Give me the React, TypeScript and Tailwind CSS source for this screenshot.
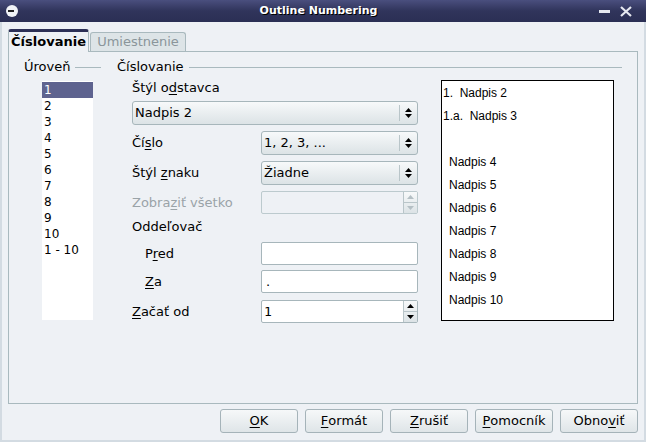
import React from "react"

const font = { fontFamily: '"DejaVu Sans", Verdana, sans-serif' }

function U({ children }: { children: React.ReactNode }) {
  return <span className="underline underline-offset-2">{children}</span>
}

function Arrows({ color = "#000" }: { color?: string }) {
  return (
    <svg width="7" height="10" viewBox="0 0 7 10">
      <path d="M3.5 0 L7 4 L0 4 Z" fill={color} />
      <path d="M0 6 L7 6 L3.5 10 Z" fill={color} />
    </svg>
  )
}

function Dropdown({ text, className }: { text: string; className?: string }) {
  return (
    <div
      className={`h-[24px] flex items-center border border-[#a7b6bb] rounded-[3px] bg-gradient-to-b from-[#f7f9fa] to-[#dce3e6] ${className}`}
    >
      <div className="flex-1 pl-[2px] text-[13px] text-black">{text}</div>
      <div className="h-[16px] w-px bg-[#b9c5c9]" />
      <div className="w-[17px] flex justify-center">
        <Arrows />
      </div>
    </div>
  )
}

function Field({ text, className }: { text?: string; className?: string }) {
  return (
    <div className={`h-[23px] flex items-center border border-[#a7b6bb] rounded-[2px] bg-white pl-[4px] text-[13px] ${className}`}>
      {text}
    </div>
  )
}

function Spin({ text, disabled }: { text?: string; disabled?: boolean }) {
  return (
    <div
      className={`h-[23px] flex border rounded-[2px] ${
        disabled ? "border-[#bccace] bg-[#eef1f5]" : "border-[#a7b6bb] bg-white"
      }`}
    >
      <div className="flex-1 flex items-center pl-[2px] text-[13px]" style={{ fontFamily: '"DejaVu Sans Mono", monospace' }}>
        {text}
      </div>
      <div className="w-[14px] flex flex-col border-l border-[#b9c5c9] bg-gradient-to-b from-[#f7f9fa] to-[#dce3e6]">
        <div className="flex-1 flex items-center justify-center border-b border-[#b9c5c9]">
          <svg width="7" height="4" viewBox="0 0 7 4">
            <path d="M3.5 0 L7 4 L0 4 Z" fill={disabled ? "#b4bfc4" : "#000"} />
          </svg>
        </div>
        <div className="flex-1 flex items-center justify-center">
          <svg width="7" height="4" viewBox="0 0 7 4">
            <path d="M0 0 L7 0 L3.5 4 Z" fill={disabled ? "#b4bfc4" : "#000"} />
          </svg>
        </div>
      </div>
    </div>
  )
}

function Btn({ children }: { children: React.ReactNode }) {
  return (
    <div className="w-[78px] h-[24px] flex items-center justify-center border border-[#a5b3b9] rounded-[3px] bg-gradient-to-b from-[#f6f8f9] to-[#dfe5e8] text-[13px] text-black">
      {children}
    </div>
  )
}

export default function App() {
  const levels = ["1", "2", "3", "4", "5", "6", "7", "8", "9", "10", "1 - 10"]
  return (
    <div className="w-[646px] h-[442px] flex flex-col bg-[#eef1f5] overflow-hidden" style={font}>
      {/* Title bar */}
      <div className="h-[22px] flex items-center bg-gradient-to-b from-[#4a4f7e] via-[#30345b] to-[#2b2f54] px-[6px]">
        <div className="w-[12px] h-[12px] rounded-full bg-[#f2f4f8] flex items-center justify-center">
          <div className="w-[6px] h-[2px] bg-[#222] -ml-[3px]" />
        </div>
        <div
          className="flex-1 text-center text-white font-bold text-[11px] pl-[20px]"
          style={{ textShadow: "1px 1px 0 #000" }}
        >
          Outline Numbering
        </div>
        <div className="flex items-center gap-[10px] pr-[8px]">
          <div className="w-[11px] h-[3px] bg-[#e6e8f0]" />
          <svg width="12" height="11" viewBox="0 0 12 11">
            <path d="M1 1 L11 10 M11 1 L1 10" stroke="#e6e8f0" strokeWidth="2.2" />
          </svg>
        </div>
      </div>

      {/* Body */}
      <div className="flex-1 flex flex-col border-l-2 border-r-2 border-b-2 border-[#d3dbe2] px-[6px]">
        {/* Tabs */}
        <div className="flex items-end mt-[6px] h-[23px]">
          <div className="h-[23px] w-[81px] flex items-center justify-center border-t-[3px] border-t-[#2c2f56] border-l border-r border-[#a9b9be] rounded-t-[3px] bg-[#eef1f5] font-bold text-[13px] text-black relative z-10 -mb-px">
            Číslovanie
          </div>
          <div className="h-[19px] w-[96px] ml-[1px] flex items-center justify-center border border-b-0 border-[#a9b9be] rounded-t-[3px] bg-[#dde4e7] text-[13px] text-[#8a959a]">
            Umiestnenie
          </div>
        </div>

        {/* Panel */}
        <div className="h-[353px] w-[630px] border border-[#a9b9be] flex pt-[8px] pl-[15px]">
          {/* Level column */}
          <div className="w-[77px] flex flex-col">
            <div className="h-[14px] flex items-center text-[13px]">
              <span>Úroveň</span>
              <div className="flex-1 h-px bg-[#a9b9be] ml-[5px]" />
            </div>
            <div className="ml-[18px] mt-[7px] w-[51px] h-[239px] bg-white pt-px">
              {levels.map((l, i) => (
                <div
                  key={l}
                  className={`h-[16px] flex items-center pl-[2px] text-[12px] ${
                    i === 0 ? "bg-[#5e638f] text-white" : "text-black"
                  }`}
                >
                  {l}
                </div>
              ))}
            </div>
          </div>

          {/* Numbering column */}
          <div className="w-[505px] ml-[16px] flex flex-col">
            <div className="h-[14px] flex items-center text-[13px]">
              <span>Číslovanie</span>
              <div className="flex-1 h-px bg-[#a9b9be] ml-[5px]" />
            </div>
            <div className="flex mt-[6px] pl-[15px]">
              {/* Form */}
              <div className="w-[286px] flex flex-col text-[13px] text-black">
                <div className="h-[15px] flex items-center">
                  Štýl o<U>d</U>stavca
                </div>
                <Dropdown text="Nadpis 2" className="mt-[6px]" />
                <div className="flex items-center mt-[6px]">
                  <div className="w-[129px]">
                    Čí<U>s</U>lo
                  </div>
                  <Dropdown text="1, 2, 3, ..." className="flex-1" />
                </div>
                <div className="flex items-center mt-[6px]">
                  <div className="w-[129px]">
                    Štýl <U>z</U>naku
                  </div>
                  <Dropdown text="Žiadne" className="flex-1" />
                </div>
                <div className="flex items-center mt-[6px]">
                  <div className="w-[129px] text-[#9aa3a8]">
                    Zobra<U>z</U>iť všetko
                  </div>
                  <div className="flex-1">
                    <Spin disabled />
                  </div>
                </div>
                <div className="h-[16px] flex items-center mt-[5px]">Oddeľovač</div>
                <div className="flex items-center mt-[7px]">
                  <div className="w-[129px] pl-[13px]">
                    P<U>r</U>ed
                  </div>
                  <Field className="flex-1" />
                </div>
                <div className="flex items-center mt-[5px]">
                  <div className="w-[129px] pl-[13px]">
                    <U>Z</U>a
                  </div>
                  <Field className="flex-1" text="." />
                </div>
                <div className="flex items-center mt-[7px]">
                  <div className="w-[129px]">
                    <U>Z</U>ačať od
                  </div>
                  <div className="flex-1">
                    <Spin text="1" />
                  </div>
                </div>
              </div>

              {/* Preview */}
              <div
                className="ml-[23px] w-[173px] h-[241px] border border-black bg-white pl-px text-[12px] text-black"
                style={{ fontFamily: '"Liberation Sans", Arial, sans-serif' }}
              >
                <div className="h-[23px] flex items-center">1.&nbsp; Nadpis 2</div>
                <div className="h-[23px] flex items-center">1.a.&nbsp; Nadpis 3</div>
                <div className="h-[23px]" />
                {[4, 5, 6, 7, 8, 9, 10].map((n) => (
                  <div key={n} className="h-[23px] flex items-center pl-[6px]">
                    Nadpis {n}
                  </div>
                ))}
              </div>
            </div>
          </div>
        </div>

        {/* Buttons */}
        <div className="flex justify-end gap-[7px] mt-[5px] pr-[0px] w-[630px]">
          <Btn>
            <U>O</U>K
          </Btn>
          <Btn>
            <U>F</U>ormát
          </Btn>
          <Btn>
            <U>Z</U>rušiť
          </Btn>
          <Btn>
            <U>P</U>omocník
          </Btn>
          <Btn>
            Obno<U>v</U>iť
          </Btn>
        </div>
      </div>
    </div>
  )
}
